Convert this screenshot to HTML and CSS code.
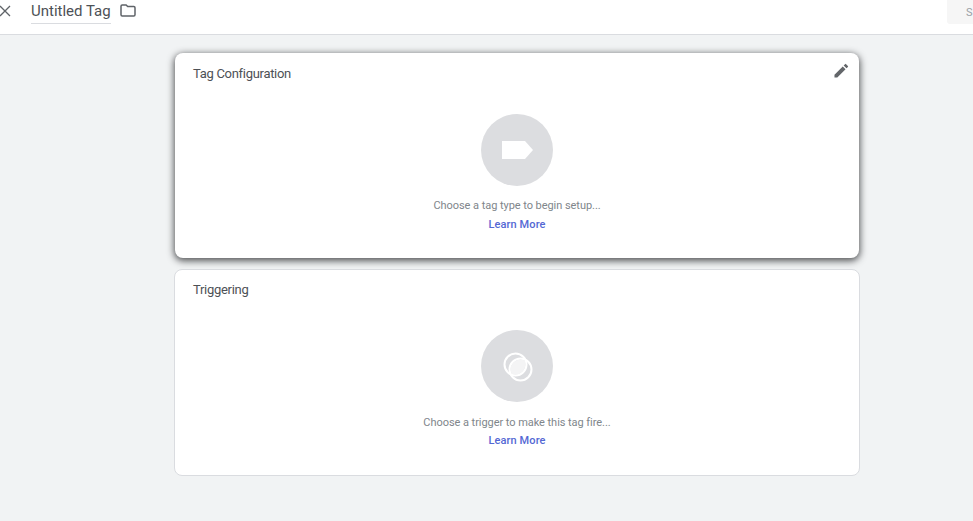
FILE: index.html
```html
<!DOCTYPE html>
<html lang="en">
<head>
<meta charset="utf-8">
<title>Untitled Tag</title>
<link rel="stylesheet" href="styles.css">
</head>
<body>
<header class="topbar">
  <svg class="close-icon" width="12" height="12" viewBox="0 0 12 12"><path d="M1 1l10 10M11 1L1 11" fill="none" stroke="#5f6368" stroke-width="1.3"/></svg>
  <div class="title">Untitled Tag</div>
  <svg class="folder-icon" width="16" height="13" viewBox="0 0 16 13"><path d="M1 2.2C1 1.5 1.5 1 2.2 1h3.9l1.6 1.6h6.1c.7 0 1.2.5 1.2 1.2v7c0 .7-.5 1.2-1.2 1.2H2.2C1.500 12 1 11.500 1 10.800z" fill="none" stroke="#5f6368" stroke-width="1.500"/></svg>
  <div class="save"><span class="save-label">S</span></div>
</header>
<main class="content">
  <section class="card card-active">
    <h2 class="card-title">Tag Configuration</h2>
    <svg class="edit-icon" width="15" height="15" viewBox="0 0 16 16"><path d="M0.500 12.500V15.500H3.500L12.300 6.700L9.300 3.700zM14.800 4.200a.8.8 0 0 0 0-1.130L12.930 1.200a.8.8 0 0 0-1.130 0L10.300 2.700L13.300 5.700z" fill="#63666a"/></svg>
    <div class="placeholder">
      <div class="circle">
        <svg class="tag-shape" width="32" height="18" viewBox="0 0 32 18"><path d="M0 0H23L31 9L23 18H0z" fill="#fff"/></svg>
      </div>
      <p class="hint">Choose a tag type to begin setup...</p>
      <a class="learn">Learn More</a>
    </div>
  </section>
  <section class="card card-trigger">
    <h2 class="card-title">Triggering</h2>
    <div class="placeholder">
      <div class="circle">
        <svg class="rings" width="30" height="30" viewBox="0 0 30 30">
          <defs><clipPath id="lens"><circle cx="12.500" cy="12.500" r="10"/></clipPath></defs>
          <circle cx="17.500" cy="17.500" r="10" fill="#f4f4f5" clip-path="url(#lens)"/>
          <circle cx="12.500" cy="12.500" r="11" fill="none" stroke="#fff" stroke-width="2"/>
          <circle cx="17.500" cy="17.500" r="11" fill="none" stroke="#fff" stroke-width="2"/>
        </svg>
      </div>
      <p class="hint">Choose a trigger to make this tag fire...</p>
      <a class="learn">Learn More</a>
    </div>
  </section>
</main>
</body>
</html>
```
FILE: styles.css
```css
* { box-sizing: border-box; }
html, body { margin: 0; height: 100%; }
body {
  background: #f1f3f4;
  font-family: Roboto, "Liberation Sans", sans-serif;
  color: #3c4043;
  overflow: hidden;
}
.topbar {
  height: 35px;
  background: #fff;
  border-bottom: 1px solid #dadce0;
  display: flex;
  align-items: flex-start;
}
.close-icon { margin: 5px 0 0 -1px; flex: none; }
.title {
  margin-left: 20px;
  width: 80px;
  height: 24px;
  font-size: 15px;
  line-height: 22px;
  color: #4d5156;
  border-bottom: 1px solid #dadce0;
  white-space: nowrap;
}
.folder-icon { margin: 4px 0 0 9px; flex: none; }
.save {
  margin-left: auto;
  width: 26px;
  height: 24px;
  background: #f6f6f6;
  border-bottom-left-radius: 3px;
  padding: 6px 0 0 19px;
  font-size: 11px;
  line-height: 13px;
  color: #9aa0a6;
  overflow: hidden;
}
.content {
  width: 684px;
  margin: 18px 0 0 175px;
  display: flex;
  flex-direction: column;
  gap: 11px;
}
.card {
  position: relative;
  height: 207px;
  background: #fff;
  border: 1px solid #dadce0;
  border-radius: 8px;
  padding: 13px 18px 0;
}
.card-trigger { margin: 0 -1px; }
.card-active {
  height: 205px;
  border: 0;
  padding: 14px 18px 0;
  box-shadow: 0 2px 7px 1px rgba(32, 33, 36, .75);
}
.card-title {
  margin: 0;
  font-size: 13px;
  line-height: 13px;
  font-weight: 400;
  letter-spacing: -.3px;
  color: #4d5156;
}
.edit-icon { position: absolute; top: 10px; right: 10px; }
.placeholder {
  display: flex;
  flex-direction: column;
  align-items: center;
  margin-top: 34px;
}
.circle {
  width: 72px;
  height: 72px;
  border-radius: 50%;
  background: #dcdde0;
  display: flex;
  align-items: center;
  justify-content: center;
}
.tag-shape { margin-left: 2px; }
.rings { margin: 1px 0 0 1px; }
.hint {
  margin: 13px 0 0;
  font-size: 11px;
  line-height: 14px;
  color: #80868b;
  letter-spacing: -.05px;
}
.learn {
  margin-top: 5px;
  font-size: 11px;
  line-height: 14px;
  font-weight: 500;
  color: #5468d4;
  letter-spacing: .1px;
}
.card-trigger .hint { margin-top: 14px; }
.card-trigger .learn { margin-top: 4px; }
```
